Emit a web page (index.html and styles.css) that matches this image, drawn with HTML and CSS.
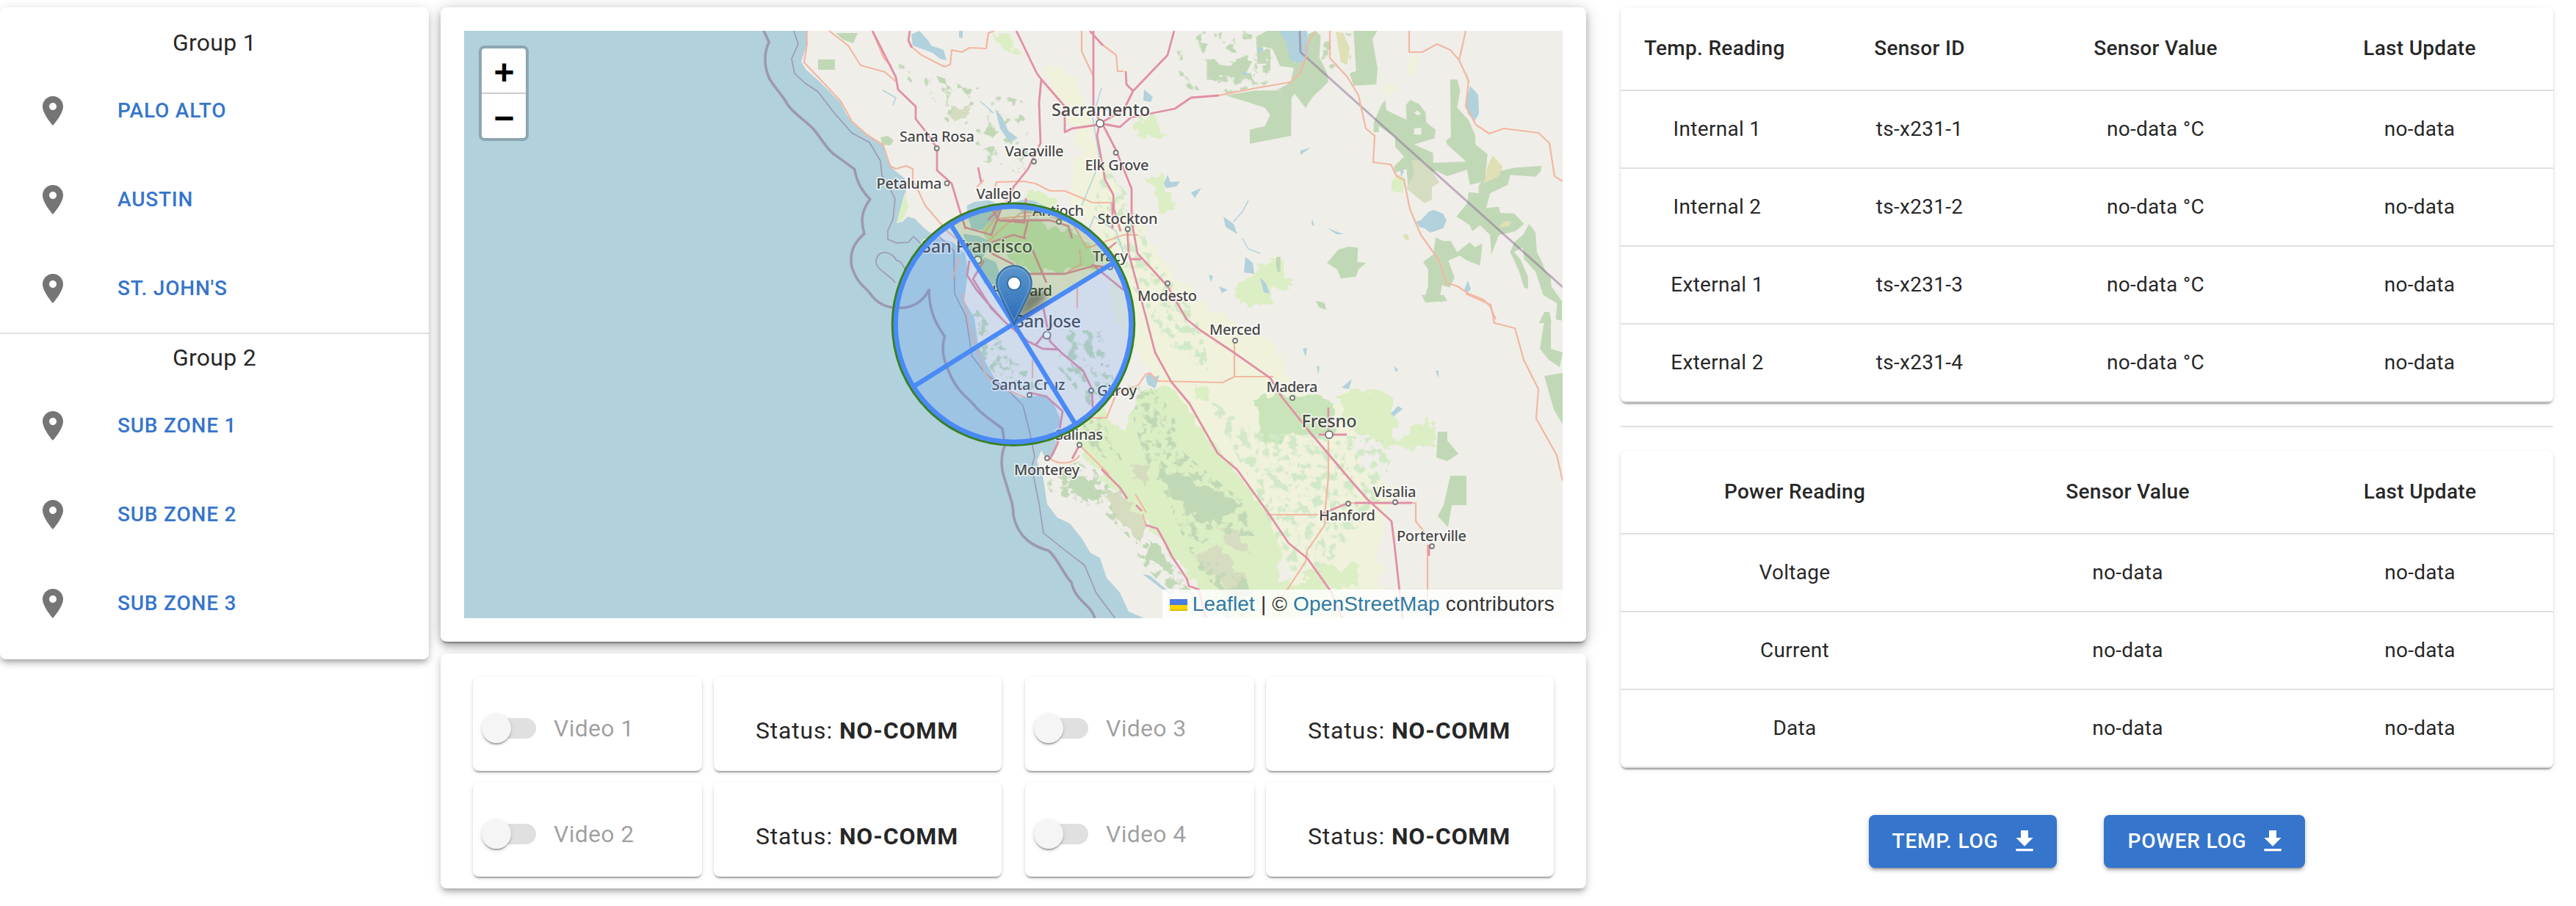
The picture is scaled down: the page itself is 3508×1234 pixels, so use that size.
FILE: index.html
```html
<!DOCTYPE html>
<html lang="en">
<head>
<meta charset="utf-8">
<title>Zone dashboard</title>
<link rel="stylesheet" href="styles.css">
</head>
<body>
<svg width="0" height="0" class="defs" aria-hidden="true">
  <symbol id="pin" viewBox="0 0 24 24"><path d="M12 2C8.13 2 5 5.13 5 9c0 5.25 7 13 7 13s7-7.75 7-13c0-3.87-3.13-7-7-7zm0 9.5c-1.38 0-2.5-1.12-2.5-2.5s1.12-2.5 2.5-2.5 2.5 1.12 2.5 2.5-1.12 2.5-2.5 2.5z"/></symbol>
  <symbol id="download" viewBox="0 0 24 24"><path d="M19 9h-4V3H9v6H5l7 7 7-7zM5 18v2h14v-2H5z"/></symbol>
</svg>
<div class="page">
  <nav class="card zones">
    <section class="group">
      <h2 class="group-title">Group 1</h2>
      <a class="zone"><svg class="zone-icon"><use href="#pin"/></svg><span>PALO ALTO</span></a>
      <a class="zone"><svg class="zone-icon"><use href="#pin"/></svg><span>AUSTIN</span></a>
      <a class="zone"><svg class="zone-icon"><use href="#pin"/></svg><span>ST. JOHN'S</span></a>
    </section>
    <section class="group second">
      <h2 class="group-title">Group 2</h2>
      <a class="zone"><svg class="zone-icon"><use href="#pin"/></svg><span>SUB ZONE 1</span></a>
      <a class="zone"><svg class="zone-icon"><use href="#pin"/></svg><span>SUB ZONE 2</span></a>
      <a class="zone"><svg class="zone-icon"><use href="#pin"/></svg><span>SUB ZONE 3</span></a>
    </section>
  </nav>

  <main class="center">
    <section class="card map-card">
      <div class="map">
        <svg class="map-canvas" viewBox="632 42 1496 800" preserveAspectRatio="none">
          <defs>
            <filter id="rough" x="-5%" y="-5%" width="110%" height="110%"><feTurbulence type="fractalNoise" baseFrequency=".06" numOctaves="3" seed="4"/><feDisplacementMap in="SourceGraphic" scale="22" xChannelSelector="R" yChannelSelector="G"/></filter>
            <filter id="speckle" x="0" y="0" width="100%" height="100%"><feTurbulence type="fractalNoise" baseFrequency=".09" numOctaves="4" seed="9" result="n"/><feColorMatrix in="n" type="matrix" values="0 0 0 0 0  0 0 0 0 0  0 0 0 0 0  0 0 0 8 -4" result="m"/><feComposite in="SourceGraphic" in2="m" operator="in"/></filter>
            <filter id="sparse" x="0" y="0" width="100%" height="100%"><feTurbulence type="fractalNoise" baseFrequency=".07" numOctaves="3" seed="21" result="n"/><feColorMatrix in="n" type="matrix" values="0 0 0 0 0  0 0 0 0 0  0 0 0 0 0  0 0 0 10 -6.1" result="m"/><feComposite in="SourceGraphic" in2="m" operator="in"/></filter>
            <filter id="soft" x="-30%" y="-30%" width="160%" height="160%"><feGaussianBlur stdDeviation="5"/></filter>
            <linearGradient id="markerFill" x1="0" y1="0" x2="0" y2="1"><stop offset="0" stop-color="#5a97cc"/><stop offset="1" stop-color="#2c69b8"/></linearGradient>
          </defs>
          <rect class="land" x="632" y="42" width="1496" height="800"/>

          <!-- farmland and grassland -->
          <g filter="url(#rough)">
            <path class="farm" d="M1420 90L1450 88 1475 130 1500 210 1530 280 1560 320 1600 380 1650 420 1740 470 1760 530 1840 560 1850 640 1900 660 1880 740 1880 842 1780 842 1720 690 1640 590 1570 510 1520 440 1500 330 1450 260 1470 200z"/>
            <path class="grass" d="M1560 525L1600 530 1640 590 1670 625 1720 690 1745 750 1740 842 1660 842 1600 760 1560 710 1500 650 1455 590 1500 560 1530 590z"/>
            <path class="grass" d="M1820 540L1850 530 1895 535 1900 600 1945 570 1960 610 1900 612 1860 595 1835 580zM1630 525h14v20h-18zM1780 770h70v30h-70zM1548 165l25-8 12 30-35-3zM1562 240l20-5 18 50-22 3zM1690 400h28l2 16-30-2zM1680 395l20-18 20-15 12 50-35 5zM1728 355l12-3 18 35-15 5zM1400 270l30-5 10 20-30 10zM1395 265l25-8 15 25-25 10zM1350 45l20 0 18 28-20-5zM1712 790l60 6 60 10v36h-140z"/>
            <path class="green" d="M1707 540h80l30 10v45h-30l-30-2-35 15z"/>
          </g>
          <path class="farmgreen" filter="url(#speckle)" d="M1640 540L1720 590 1800 590 1900 600 1890 640 1880 680 1800 780 1760 780 1700 650zM1500 220l40 50 30 80 60 80 20 80-60-40-60-100-40-80z"/>
          <path class="forest" filter="url(#sparse)" d="M1640 42L1740 42 1740 110 1600 130 1590 80zM1200 80l200 60 0 100-60-20-130-140zM1780 45l60 0 0 60-60 20z"/>
          <path class="forest" filter="url(#speckle)" d="M1300 430l120 90-20 14-40-20-50-60zM1450 450l50 0 20 80-30 30-50-60zM1640 95l90-30 0 50-60 12zM1300 440l30-20 60 80-20 30z"/>
          <path class="green" filter="url(#rough)" d="M1335 300l80 0 70 30 10 35-90 5-60-40z"/>

          <!-- forests -->
          <g filter="url(#rough)">
            <path class="forest" d="M1580 650L1600 640 1640 660 1675 675 1690 690 1665 705 1640 715 1615 690 1590 670zM1675 790l22 2 10 20-20 5-15-12zM1560 738l18 8 20 26-12 6-22-22zM1460 650l30 5 12 20-20 2-30-16z"/>
            <path class="olive" d="M1543 632l20 2-2 26-16-12zM1505 665l35 20 22 34-10 24-40-50zM1625 760l30-20 40 50-20 15zM1298 145l24-4-4 18-18 6zM1655 715l30 14 20 26-30-8z"/>
          </g>
          <path class="forest" filter="url(#speckle)" d="M1535 525L1575 530 1600 570 1605 610 1640 640 1690 680 1710 730 1655 730 1620 750 1690 780 1730 842 1670 842 1640 790 1610 730 1590 680 1560 625 1545 580zM1470 570l30 0 30 60-40-10zM1420 645l60-20 40 50 20 60-40-40-70-25zM1545 725l60 50 40 67h-20l-75-80z"/>
          <g transform="translate(1640 0) scale(.34439 .33333)">
            <g class="forest">
              <path d="M10 245L40 240 60 265 100 270 150 245 190 250 170 290 140 320 60 305 50 330 10 325z"/>
              <path d="M205 150L250 125 350 125 340 230 370 280 300 270 270 200 230 190 250 260 210 260z"/>
              <path d="M410 140l30-15 20 20-5 90 30 60 5 40-60 60-30 45-60-80-60 10 60-30 20-90 35-20z"/>
              <path d="M85 390L200 370 300 370 345 330 400 320 345 400 343 555 180 587 180 530 240 515 260 470 240 440 180 420z"/>
              <path d="M590 125H685L665 160 685 280 680 345 590 350 575 300 600 290z"/>
              <path fill-rule="evenodd" d="M715 408L720 450 800 490 797 430 815 408 850 425 875 460 878 500 915 530 910 565 830 590 905 625 905 665 1040 660 1050 690 960 720 920 700 890 700 830 740 805 760 800 690 755 705 750 680 790 640 755 600 755 560 690 515 690 540 670 540 670 500 700 430zM830 460l15 12 12-8-15-12zM830 525l0 25 28 0 0-28z"/>
              <path d="M972 325L1000 325 1012 370 1000 440 1045 490 1072 555 1072 590 1120 630 1110 740 1050 755 1040 700 1035 660 960 590 955 575 975 560z"/>
              <path d="M1110 720L1165 700 1230 685 1335 678 1330 700 1310 722 1210 715 1200 755 1130 790 1115 850 1165 845 1170 870 1225 872 1265 915 1230 945 1165 960 1135 1040 1130 960 1090 920 1060 945 1050 920 997 885 1040 830 1045 785 1085 790 1085 760z"/>
              <path d="M1285 915L1310 950 1315 1030 1335 1070 1350 1110 1370 1130 1372 1170 1414 1230 1414 1310 1390 1305 1395 1240 1340 1205 1310 1110 1265 1060 1260 1010 1225 1030 1250 1060 1280 1130 1280 1180 1265 1175 1245 1110 1210 1030 1225 990 1260 960z"/>
              <path d="M915 970l30 15 30 0 25 45 50-40 20 20 30-15-10 90-50-20-30-20-45 20 25 70-20 40-30-10-10 60 15 10-75-15 15-50 0-70-20-30 40-30z"/>
              <path d="M485 1075L530 1020 570 1008 608 1012 605 1070 640 1075 610 1100 600 1130 540 1138 525 1100zM285 1050h16v60l-20 5zM440 1230l30 5 8 30-25-10zM1345 1275l20 0 8 45h-50z"/>
            </g>
            <g class="olive"><path d="M820 655h50l60 90-30 20 0 50-30 15-70-60 30-60z"/></g>
            <path class="sand" d="M1140 635l40 45-15 40-60 30 15-70zM1165 930l20-25 28 0-5 18zM785 960l15-5 12 20-15 8zM520 130l30 5 25 60-10 70-25-10z"/>
            <path class="grass" d="M740 780l0-40 25-30 30 20-10 60zM118 1210l20-40 70-10-5-50 60-40 20 10 10 50 45 50-20 10-50-20-36 40 0 30-60 5zM1030 300l12 0 5 40-10 0z"/>
            <path class="farm" d="M715 340l40 10 5 20-45 25-10-20zM820 225l30 0-10 60-20 40-20-50zM690 280l20 30-10 20z"/>
          </g>
          <g class="forest">
            <path d="M1114 81h23v14h-23zM1199 187l10-2 8 6-4 7-12-1zM1138 45l30 0-6 14-14-5zM1958 588h13l0 12 15 18-15 10-15-5zM1975 648h22v40h-20l-5 30-14-15 8-15zM2105 425l7 10 0 40 16 5-4 20-15-10-12-15zM2103 512l25-4v70l-12-20zM1275 103l12 4 2 8-10-3zM1794 410l10 3 2 9-8-4zM1936 402h30l5 8-30 2z"/>
          </g>

          <!-- lakes -->
          <g class="water">
            <path d="M1241 47L1252 42 1264 55 1268 62 1285 68 1289 82 1280 80 1270 72 1243 62zM1355 148l10 12 8 18 13 10-12 5-12-18zM1558 122l12 10-3 7-10-2zM1306 42h5v10l-5-1zM1585 250l5-12 4 10 13-1-5 7-14 2zM1622 262l14-6-9 14zM1560 513l6-5 4 6 9-3-6 18-10-5zM1827 528l14-12-4 14zM1894 563l10-10 6 4-12 10zM1774 475l6-1-2 12zM1793 498l4 2-2 10zM1898 499l6 4-3 4zM1955 505h4v10zM1556 782l10 2 32 27-8-3z"/>
            <path d="M1741 42H1780L1782 72 1775 84 1765 86 1756 80 1751 58z"/>
            <path d="M2002 117L2013 129 2014 155 2008 165 1999 155 1996 140z"/>
            <path d="M1928 302L1935 300 1946 288 1953 286 1965 291 1970 300 1965 311 1948 317 1940 311 1933 309z"/>
            <path d="M1666 295l14 10 5 14-16-10zM1696 350l10 8 2 15-14-2zM1716 378l8 8 5 14-8-2zM1787 298l3 10-4-2zM1808 311l22 8-10 0zM1999 382l4 12-4 4-5-3zM1907 231l5 2-4 8zM1711 65l10 0-5 8zM1690 97l12 3-10 2zM1771 205l14-4-14 10zM1646 374l6 2-3 8zM1660 390l12 5-8 4z"/>
          </g>
          <path class="stream" d="M1680 302l12-14 8-15M1692 325l8 14 16 6M1202 123l18 10-4 10M1335 138l18 16M1500 120l-12 40 10 60-25 60M1480 320l10-25 30 20 10 30"/>

          <!-- Pacific and San Francisco Bay -->
          <path class="water" d="M632 42H1100L1099 60 1091 84 1098 95 1117 112 1130 125 1145 140 1152 155 1162 168 1180 184 1198 193 1204 200 1208 215 1216 230 1222 235 1232 243 1234 260 1225 290 1221 304 1229 302 1236 295 1246 298 1261 313 1279 325 1297 330 1314 345 1316 355 1318 373 1313 410 1327 433 1332 470 1342 493 1353 513 1373 533 1390 542 1405 540 1423 538 1435 550 1443 568 1445 583 1442 603 1435 620 1423 622 1418 614 1412 628 1420 647 1426 687 1440 705 1457 713 1473 733 1485 753 1498 760 1507 787 1525 807 1537 833 1558 842H632z"/>
          <g class="water" transform="translate(1160 240) scale(.33333)">
            <path d="M470 120L500 105 560 98 612 120 600 170 560 190 530 220 490 215 475 170zM455 235L520 245 555 262 562 290 530 340 545 332 588 350 605 400 660 480 690 560 640 520 590 450 540 440 525 370 500 320 470 300zM650 110L700 95 745 100 800 128 760 150 700 150z"/>
          </g>
          <path class="grass" d="M1232 262l5 20-8 18-8 4 5-20z"/>

          <!-- maritime limits -->
          <g class="limit" transform="translate(600 0) scale(.49744 .54846)">
            <path d="M884 75L899 105C885 130 885 165 900 195 920 225 940 240 950 260 970 285 1000 300 1020 320 1040 340 1060 375 1080 385L1133 420C1140 455 1155 475 1176 495 1155 520 1148 545 1160 580 1130 605 1120 625 1125 660 1140 705 1160 710 1175 728 1195 755 1225 765 1255 765 1290 765 1320 750 1337 720 1337 775 1360 810 1380 835 1370 865 1378 895 1388 915 1410 970 1440 985 1460 1005 1480 1030 1520 1050 1538 1065L1545 1107"/>
          </g>
          <path class="limit" d="M1369 606C1362 620 1363 640 1369 655 1376 680 1380 685 1380 702 1387 735 1410 745 1428 750 1440 760 1450 785 1459 793 1465 820 1485 822 1491 842"/>
          <path class="limit thin" d="M1081 42l6 18-9 20 4 20 14 13 18 12 23 30 23 26 24 13 15 25 2 20 8 12 10 20-3 28-7 15 0 12 12 5 16-1 7-8 10 10M1279 322l20 20 1 58 15 30 5 30 3 24 20 26 30 22 20 20 10 40 6 30-4 14 10 50 6 40 30 24 26 20 16 38 30 40 8 35"/>
          <path class="limit thin" d="M1219 385C1213 375 1190 366 1193 354 1197 338 1216 343 1221 355 1228 355 1229 362 1233 367"/>
          <path class="limit state" d="M1770 42L1771 71 2128 391"/>

          <!-- secondary roads -->
          <g class="road">
            <path d="M1098 42L1099 60 1095 85 1117 108 1145 138 1160 165 1180 183 1203 198 1212 226 1220 230 1234 226 1243 230 1243 244 1260 280 1290 315 1314 335M1129 42L1155 62 1172 89 1205 98 1220 111M1188 42L1204 80 1214 90M1239 62L1255 75 1286 91 1294 88 1296 68 1310 71 1320 65 1343 66 1346 45 1354 42M1473 42L1473 70 1488 102 1490 110M1500 60L1520 75 1522 97 1530 97M1660 130L1710 120 1757 112 1770 100 1778 80 1780 60 1790 44M1811 42V79L1835 105 1850 130 1860 175 1872 185 1870 221 1894 224 1902 240 1912 245 1920 285 1935 320 1960 355 1969 385 1985 390 2000 400 2020 408 2029 417 2037 435M1919 42V71H1937L1957 60 1975 68 1987 82 2000 110 1996 145 2010 170 2028 182 2048 175 2095 181 2110 195 2117 240 2128 247M1996 42L1987 82M1355 255L1357 248 1395 247 1410 250 1430 260 1450 260 1488 276 1515 276M1340 245L1330 255"/>
            <path d="M1996 400L2030 415 2035 440 2063 447 2075 490 2095 530 2092 570 2120 620 2128 655M1681 465V513H1734M1560 510L1566 508 1577 519 1665 521 1681 513M1809 600V650L1805 690 1804 715 1780 750 1778 765 1755 800 1740 820M1725 701H1795M1840 685H1928V710L1940 725M1944 742V842M1520 536L1550 525 1560 510M1297 380l10-30M1345 330l15-15 30-25 30 0M1430 295l30 8 20 35 50-18 20 0M1467 390v30M1310 400l12 50 20 60 15 15 40 17M1406 490v25"/>
            <path d="M1340 318L1355 298 1425 292M1470 340l2 20-18 10M1475 569h32l14-35M1470 606l40 40M1430 625c15 10 35 5 40-5M1546 673l15 25M1556 700l4 15"/>
          </g>

          <!-- motorways -->
          <g class="motorway">
            <path d="M1188 42L1220 105 1223 122 1247 145 1247 162 1263 182 1276 202 1276 232 1296 250 1308 290 1315 312M1239 42L1237 55 1242 65M1384 42L1412 100 1418 108 1450 145 1450 180 1460 175 1495 170M1418 108L1415 140 1417 195 1400 230 1380 255 1370 275M1489 42V150L1498 165 1494 185 1505 245 1516 265 1517 285 1526 315M1599 42L1590 75 1543 124 1530 150 1498 168 1525 173 1540 160 1600 148 1622 133 1660 130M1543 124L1534 115 1533 97M1484 42L1502 62M1502 170L1520 205 1541 257 1541 300 1549 345 1590 390 1616 435 1635 450 1680 480 1730 515 1745 540 1785 590 1840 655 1862 680 1895 710 1899 742 1910 842M1535 310L1537 345 1560 430 1573 480 1595 520 1620 550 1658 617 1685 640 1728 700 1755 740 1780 760 1812 805 1828 842M1515 276l0 35M1538 353h16"/>
            <path d="M1347 278L1360 300 1395 303 1397 270M1315 310L1350 320 1365 280 1345 300M1365 300L1430 300 1455 308 1460 325M1350 330L1380 320 1397 325M1400 300L1394 325M1406 340L1425 385M1400 373H1450L1490 362 1515 365M1320 355L1317 375 1330 395 1347 415 1365 435M1350 345L1380 360 1382 380M1420 415L1430 465 1445 480 1475 505 1487 530 1488 555M1340 355L1325 380 1350 420 1370 440 1400 465 1420 475 1440 476M1410 470L1435 440M1403 535L1425 540 1447 560 1440 605 1430 625M1487 360L1530 395M1508 340L1520 330M1470 606L1460 625M1500 639l25 25 10 15M1547 688l8 8M1560 715l16 5 10 18 10 20 20 30 3 10 14 5 4 20 6 20M1800 700l36-15M1845 685h78M1946 742v15M1809 555v30M1796 592h30l8 0M1332 228l4 20"/>
          </g>

          <g class="towns">
            <circle cx="1275.7" cy="202" r="3"/><circle cx="1289.6" cy="249.700" r="3"/><circle cx="1408" cy="220" r="3"/><circle cx="1519.600" cy="208" r="3"/><circle cx="1498" cy="168" r="5"/><circle cx="1442" cy="302" r="3"/><circle cx="1535.700" cy="312" r="3"/><circle cx="1391.500" cy="354" r="0"/><circle cx="1331.500" cy="354" r="5"/><circle cx="1512" cy="364" r="3"/><circle cx="1590" cy="386" r="3"/><circle cx="1425.700" cy="456.500" r="5"/><circle cx="1402" cy="538" r="3"/><circle cx="1486" cy="532" r="3"/><circle cx="1470" cy="606" r="3"/><circle cx="1426" cy="624" r="3"/><circle cx="1682" cy="464" r="3"/><circle cx="1760" cy="542" r="3"/><circle cx="1810" cy="592" r="5"/><circle cx="1792.500" cy="686" r="0"/><circle cx="1836" cy="686" r="3"/><circle cx="1900" cy="684" r="3"/><circle cx="1950" cy="744" r="3"/>
          </g>
          <g class="places">
            <text x="1225" y="193" textLength="102">Santa Rosa</text>
            <text x="1368.500" y="212.500" textLength="80">Vacaville</text>
            <text x="1477.500" y="232" textLength="87">Elk Grove</text>
            <text class="city" x="1432" y="158" textLength="134">Sacramento</text>
            <text x="1193.500" y="256.500" textLength="89">Petaluma</text>
            <text x="1329.500" y="271" textLength="61">Vallejo</text>
            <text x="1406" y="293.500" textLength="70">Antioch</text>
            <text x="1494.500" y="304.500" textLength="82">Stockton</text>
            <text class="city" x="1255" y="344" textLength="151">San Francisco</text>
            <text x="1488" y="356" textLength="48">Tracy</text>
            <text x="1549" y="409.500" textLength="81">Modesto</text>
            <text x="1351" y="402.500" textLength="82">Hayward</text>
            <text class="city" x="1382" y="445.500" textLength="90">San Jose</text>
            <text x="1350.500" y="530.500" textLength="100">Santa Cruz</text>
            <text x="1494" y="539" textLength="54">Gilroy</text>
            <text x="1437" y="598.500" textLength="65">Salinas</text>
            <text x="1381" y="646.500" textLength="89">Monterey</text>
            <text x="1647" y="455.500" textLength="70">Merced</text>
            <text x="1724.500" y="533.500" textLength="70">Madera</text>
            <text class="city" x="1772.500" y="581.500" textLength="75">Fresno</text>
            <text x="1869.500" y="676.500" textLength="59">Visalia</text>
            <text x="1796" y="708.500" textLength="77">Hanford</text>
            <text x="1902" y="736.500" textLength="95">Porterville</text>
          </g>

          <!-- coverage range and sectors -->
          <circle class="range" cx="1380" cy="441.700" r="163.300"/>
          <path class="sector-active" d="M1380.500 441L1296 308.300A158 158 0 0 1 1516.700 357.300z"/>
          <path class="sector" d="M1380.500 441L1516.700 357.300A160.500 160.500 0 1 1 1296 306z"/>
          <circle class="ring" cx="1380" cy="441.700" r="160.300"/>
          <path class="spokes" d="M1296 308L1380.500 441 1465 578.500M1517 357.500L1380.500 441 1244 526.500"/>
          <path class="marker-shadow" filter="url(#soft)" d="M1381 441L1398 400 1428 396 1420 412z"/>
          <g transform="translate(1356 361) scale(2)">
            <path class="marker" d="M12.500.5C6 .5.600 5.800.600 12.300c0 3 .7 4.800 2 7.500L12.500 40.500l9.900-20.700c1.300-2.700 2-4.500 2-7.500C24.400 5.800 19 .5 12.500.5z"/>
            <path class="marker-edge" d="M12.500 1.600C6.600 1.600 1.700 6.400 1.700 12.300c0 2.800.7 4.500 1.900 7L12.500 38l8.900-18.700c1.200-2.500 1.900-4.200 1.900-7 0-5.900-4.900-10.700-10.800-10.700z"/>
            <circle class="marker-hole" cx="12.500" cy="12.500" r="4.500"/>
          </g>
        </svg>
        <div class="zoom"><a class="zoom-btn">+</a><a class="zoom-btn">−</a></div>
        <div class="attribution"><svg class="flag" viewBox="0 0 12 8"><path fill="#4c7be1" d="M0 0h12v4H0z"/><path fill="#ffd500" d="M0 4h12v3H0z"/><path fill="#e0bc00" d="M0 7h12v1H0z"/></svg><a>Leaflet</a> | © <a>OpenStreetMap</a> contributors</div>
      </div>
    </section>

    <section class="card videos">
      <div class="tile video"><span class="switch"><i class="thumb"></i></span>Video 1</div>
      <div class="tile status"><span>Status: <b>NO-COMM</b></span></div>
      <div class="tile video third"><span class="switch"><i class="thumb"></i></span>Video 3</div>
      <div class="tile status"><span>Status: <b>NO-COMM</b></span></div>
      <div class="tile video"><span class="switch"><i class="thumb"></i></span>Video 2</div>
      <div class="tile status"><span>Status: <b>NO-COMM</b></span></div>
      <div class="tile video third"><span class="switch"><i class="thumb"></i></span>Video 4</div>
      <div class="tile status"><span>Status: <b>NO-COMM</b></span></div>
    </section>
  </main>

  <aside class="readings">
    <div class="sheet">
      <table class="table">
        <colgroup><col class="t-name"><col class="t-id"><col class="t-value"><col class="t-last"></colgroup>
        <thead><tr><th class="start">Temp. Reading</th><th>Sensor ID</th><th>Sensor Value</th><th>Last Update</th></tr></thead>
        <tbody>
          <tr><td>Internal 1</td><td>ts-x231-1</td><td>no-data °C</td><td>no-data</td></tr>
          <tr><td>Internal 2</td><td>ts-x231-2</td><td>no-data °C</td><td>no-data</td></tr>
          <tr><td>External 1</td><td>ts-x231-3</td><td>no-data °C</td><td>no-data</td></tr>
          <tr><td>External 2</td><td>ts-x231-4</td><td>no-data °C</td><td>no-data</td></tr>
        </tbody>
      </table>
    </div>
    <hr class="divider">
    <div class="sheet">
      <table class="table">
        <colgroup><col class="p-name"><col class="p-value"><col class="p-last"></colgroup>
        <thead><tr><th>Power Reading</th><th>Sensor Value</th><th>Last Update</th></tr></thead>
        <tbody>
          <tr><td>Voltage</td><td>no-data</td><td>no-data</td></tr>
          <tr><td>Current</td><td>no-data</td><td>no-data</td></tr>
          <tr><td>Data</td><td>no-data</td><td>no-data</td></tr>
        </tbody>
      </table>
    </div>
    <div class="actions">
      <button class="button">TEMP. LOG<svg class="button-icon"><use href="#download"/></svg></button>
      <button class="button">POWER LOG<svg class="button-icon"><use href="#download"/></svg></button>
    </div>
  </aside>
</div>
</body>
</html>
```
FILE: styles.css
```css
* { box-sizing: border-box; }

body {
  margin: 0;
  background: #fff;
  color: rgba(0, 0, 0, .87);
  font: 400 32px/48px Roboto, "Liberation Sans", sans-serif;
  letter-spacing: .3px;
  overflow: hidden;
}

.defs { position: absolute; }

.page {
  display: flex;
  align-items: flex-start;
  width: 3508px;
  height: 1234px;
  padding-top: 10px;
}

.card {
  background: #fff;
  border-radius: 8px;
  box-shadow: 0 6px 6px -4px rgba(0, 0, 0, .2), 0 6px 8px 0 rgba(0, 0, 0, .14), 0 2px 16px 0 rgba(0, 0, 0, .12);
}

/* zone list */
.zones { width: 584px; height: 888px; margin-right: 16px; }
.group { padding-top: 24px; }
.group.second { padding-top: 8px; border-top: 2px solid #e0e0e0; }
.group-title { margin: 0 0 8px; font-size: 32px; font-weight: 400; text-align: center; }
.zone {
  display: flex;
  align-items: center;
  height: 121px;
  padding-left: 48px;
  color: #3575cb;
  font-size: 28px;
  font-weight: 500;
  letter-spacing: .8px;
}
.zone-icon { width: 48px; height: 48px; margin-right: 64px; fill: #757575; }

/* map */
.center { width: 1560px; margin-right: 47px; }
.map-card {
  height: 864px;
  padding: 32px;
  box-shadow: 0 4px 2px -2px rgba(0, 0, 0, .3), 0 6px 10px 0 rgba(0, 0, 0, .26), 0 2px 22px 0 rgba(0, 0, 0, .2);
}
.map { position: relative; height: 800px; overflow: hidden; }
.map-canvas { display: block; width: 100%; height: 100%; }
.land { fill: #f0eee9; }
.water { fill: #b1d1dc; }
.farm { fill: #f0f2dc; }
.grass { fill: #dceec4; }
.green { fill: #c8e4b8; }
.farmgreen { fill: #d2e9c8; }
.forest { fill: #c1d8b6; }
.olive { fill: #d6dcc0; }
.sand { fill: #dfe0b5; }
.stream { fill: none; stroke: #b1d1dc; stroke-width: 1.5; }
.limit { fill: none; stroke: #9d98b3; stroke-width: 3.6; stroke-linejoin: round; }
.limit path { vector-effect: non-scaling-stroke; }
.limit.thin { stroke-width: 1.6; }
.limit.state { stroke: rgba(140, 110, 150, .5); stroke-width: 3; }
.road, .motorway { fill: none; stroke-linejoin: round; }
.road { stroke: #f2b7a1; stroke-width: 2.2; }
.motorway { stroke: #e18fa5; stroke-width: 2.8; }
.towns { fill: #fff; stroke: #777; stroke-width: 1.8; }
.places {
  font: 500 20px "Noto Sans", sans-serif;
  letter-spacing: 0;
  fill: #484848;
  stroke: rgba(255, 255, 255, .6);
  stroke-width: 4px;
  stroke-linejoin: round;
  paint-order: stroke;
}
.places .city { font-size: 23.5px; }

.range { fill: none; stroke: #37811f; stroke-width: 6; }
.sector { fill: rgba(80, 145, 250, .2); }
.sector-active { fill: rgba(60, 135, 30, .2); }
.ring, .spokes { fill: none; stroke: #4a8af7; stroke-width: 6.3; }
.marker { fill: url(#markerFill); stroke: #336d9e; stroke-width: 1; }
.marker-edge { fill: none; stroke: rgba(255, 255, 255, .15); stroke-width: 1; }
.marker-hole { fill: #fff; stroke: #346fa4; stroke-width: 1; }
.marker-shadow { fill: rgba(0, 0, 0, .4); }

.zoom {
  position: absolute;
  left: 20px;
  top: 20px;
  width: 68px;
  border: 4px solid rgba(0, 0, 0, .2);
  border-radius: 8px;
  background: #fff;
  background-clip: padding-box;
}
.zoom-btn {
  display: block;
  height: 60px;
  padding: 3px 0 0 1px;
  color: #000;
  font: bold 48px/60px "Liberation Sans", Arial, sans-serif;
  letter-spacing: 0;
  text-align: center;
}
.zoom-btn:first-child { height: 62px; border-bottom: 2px solid #ccc; }

.attribution {
  position: absolute;
  right: 0;
  bottom: 0;
  padding: 1px 11px 0 10px;
  background: rgba(255, 255, 255, .8);
  color: #333;
  font: 28px/38px "Liberation Sans", Arial, sans-serif;
  letter-spacing: .16px;
  white-space: nowrap;
}
.attribution a { color: #2f78a6; }
.flag { width: 24px; height: 16px; margin-right: 7px; }

/* video feeds */
.videos {
  display: grid;
  grid-template-columns: 312px 392px 328px 392px;
  grid-template-rows: 128px 128px;
  column-gap: 16px;
  row-gap: 16px;
  height: 320px;
  margin-top: 16px;
  padding: 32px 44px 16px;
}
.tile {
  display: flex;
  align-items: center;
  border-radius: 8px;
  background: #fff;
  box-shadow: 0 4px 2px -2px rgba(0, 0, 0, .2), 0 2px 2px 0 rgba(0, 0, 0, .14), 0 2px 6px 0 rgba(0, 0, 0, .12);
}
.third { margin-left: 16px; }
.video { padding: 12px 0 0 18px; color: rgba(0, 0, 0, .38); }
.switch {
  position: relative;
  width: 68px;
  height: 28px;
  margin-right: 24px;
  border-radius: 14px;
  background: #e0e0e0;
}
.thumb {
  position: absolute;
  left: -6px;
  top: -6px;
  width: 40px;
  height: 40px;
  border-radius: 50%;
  background: #f5f5f5;
  box-shadow: 0 4px 2px -2px rgba(0, 0, 0, .2), 0 2px 2px 0 rgba(0, 0, 0, .14), 0 2px 6px 0 rgba(0, 0, 0, .12);
}
.status { justify-content: center; padding: 17px 2px 0 0; letter-spacing: .85px; }

/* readings */
.readings { width: 1270px; }
.sheet {
  overflow: hidden;
  border-radius: 8px;
  background: #fff;
  box-shadow: 0 4px 2px -2px rgba(0, 0, 0, .2), 0 2px 2px 0 rgba(0, 0, 0, .14), 0 2px 6px 0 rgba(0, 0, 0, .12);
}
.table {
  width: 1270px;
  border-collapse: separate;
  border-spacing: 0;
  table-layout: fixed;
  font-size: 28px;
  line-height: 40px;
}
.table th, .table td { height: 106px; padding: 0; border-bottom: 2px solid #e0e0e0; text-align: center; font-weight: 400; }
.table th { height: 114px; font-weight: 500; }
.table th.start { padding-left: 32px; text-align: left; white-space: nowrap; }
.t-name { width: 263px; }
.t-id { width: 288px; }
.t-value { width: 355px; }
.p-name { width: 474px; }
.p-value { width: 433px; }
.divider { height: 2px; margin: 32px 0; border: 0; background: #e0e0e0; }

.actions { display: flex; justify-content: center; gap: 64px; margin-top: 64px; }
.button {
  display: flex;
  align-items: center;
  height: 72px;
  padding: 0 32px;
  border: 0;
  border-radius: 8px;
  background: #3575cb;
  color: #fff;
  font: 500 28px/48px Roboto, "Liberation Sans", sans-serif;
  letter-spacing: .8px;
  box-shadow: 0 6px 2px -4px rgba(0, 0, 0, .2), 0 4px 4px 0 rgba(0, 0, 0, .14), 0 2px 10px 0 rgba(0, 0, 0, .12);
}
.button-icon { width: 40px; height: 40px; margin: 0 -8px 0 16px; fill: #fff; }
```
